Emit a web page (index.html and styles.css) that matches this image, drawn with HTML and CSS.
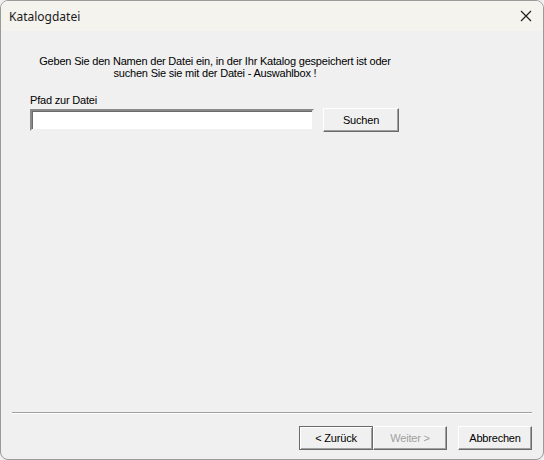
FILE: index.html
```html
<!DOCTYPE html>
<html lang="de">
<head>
    <meta charset="UTF-8">
    <title>Katalogdatei</title>
    <link rel="stylesheet" href="styles.css">
</head>
<body>
    <div class="window">
        <div class="titlebar">
            <span class="title">Katalogdatei</span>
            <svg class="close" width="12" height="12" viewBox="0 0 12 12">
                <path d="M1 1 L11 11 M11 1 L1 11" stroke="#1a1a1a" stroke-width="1.1" fill="none"/>
            </svg>
        </div>
        <div class="content">
            <div class="form">
                <p class="intro">Geben Sie den Namen der Datei ein, in der Ihr Katalog gespeichert ist oder<br>suchen Sie sie mit der Datei - Auswahlbox !</p>
                <label class="label" for="pfad">Pfad zur Datei</label>
                <div class="row">
                    <input class="field" id="pfad" type="text">
                    <button class="btn search">Suchen</button>
                </div>
            </div>
            <div class="footer">
                <div class="separator"></div>
                <div class="buttons">
                    <button class="btn nav default">&lt; Zurück</button>
                    <button class="btn nav" disabled>Weiter &gt;</button>
                    <button class="btn nav cancel">Abbrechen</button>
                </div>
            </div>
        </div>
    </div>
</body>
</html>
```

FILE: styles.css
```css
html, body {
    margin: 0;
    padding: 0;
    background: #f0f0f0;
}
.window {
    width: 544px;
    height: 460px;
    box-sizing: border-box;
    border: 1px solid #9a9a9a;
    border-radius: 8px;
    background: #f0f0f0;
    overflow: hidden;
    display: flex;
    flex-direction: column;
}
.titlebar {
    height: 30px;
    background: #f4f3ee;
    display: flex;
    align-items: center;
    justify-content: space-between;
    padding: 0 11px 0 8px;
    flex-shrink: 0;
}
.title {
    font-family: "Noto Sans", "Open Sans", sans-serif;
    font-size: 12px;
    color: #1a1a1a;
}
.close {
    display: block;
}
.content {
    flex: 1;
    display: flex;
    flex-direction: column;
    justify-content: space-between;
    font-family: "Liberation Sans", Arial, sans-serif;
    font-size: 11px;
    letter-spacing: -0.2px;
    color: #000;
}
.form {
    padding: 24px 0 0 29px;
}
.intro {
    width: 370px;
    margin: 0;
    text-align: center;
    white-space: nowrap;
    line-height: 12px;
}
.label {
    display: block;
    margin-top: 15px;
    line-height: 13px;
}
.row {
    display: flex;
    align-items: center;
    gap: 9px;
    margin-top: 1px;
}
.field {
    width: 284px;
    height: 22px;
    box-sizing: border-box;
    margin: 0;
    padding: 0 3px;
    background: #fff;
    border-style: solid;
    border-width: 2px;
    border-color: #8a8a8a #f0f0f0 #f0f0f0 #8a8a8a;
    box-shadow: inset 1px 1px 0 #6a6a6a;
    outline: none;
    font: inherit;
}
.btn {
    height: 24px;
    box-sizing: border-box;
    margin: 0;
    padding: 0;
    background: #f0f0f0;
    font-family: "Liberation Sans", Arial, sans-serif;
    font-size: 11px;
    letter-spacing: -0.2px;
    color: #000;
    border-style: solid;
    border-width: 1px;
    border-color: #ffffff #6a6a6a #6a6a6a #ffffff;
    box-shadow: inset -1px -1px 0 #a0a0a0;
}
.search {
    width: 76px;
}
.footer {
    padding: 0 11px 9px 11px;
}
.separator {
    height: 1px;
    background: #a0a0a0;
    border-bottom: 1px solid #ffffff;
}
.buttons {
    display: flex;
    justify-content: flex-end;
    margin-top: 12px;
}
.nav {
    width: 74px;
    height: 24px;
}
.nav.default {
    border-color: #6a6a6a;
    box-shadow: inset 1px 1px 0 #ffffff, inset -1px -1px 0 #a0a0a0;
}
.nav:disabled {
    color: #a0a0a0;
}
.cancel {
    margin-left: 11px;
}
```
